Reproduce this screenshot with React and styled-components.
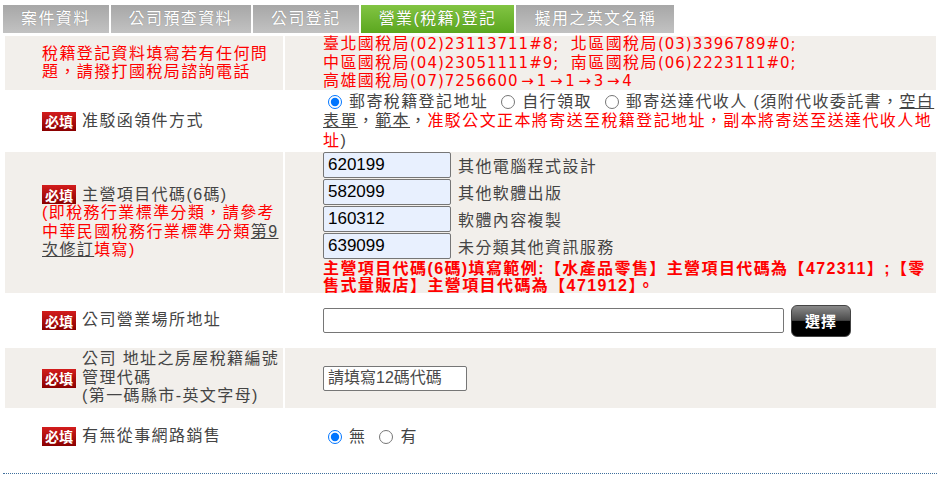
import React from "react";
import styled, { createGlobalStyle } from "styled-components";

const Global = createGlobalStyle`
  html, body { margin: 0; padding: 0; background: #fff; }
  body {
    font-family: "Liberation Sans", "Noto Sans CJK TC", sans-serif;
    font-size: 16px;
    letter-spacing: 1.4px;
    color: #444;
  }
`;

const Page = styled.div`
  padding: 5px 0 0 3px;
  width: 935px;
`;

const Tabs = styled.div`
  display: flex;
  gap: 2px;
  height: 28px;
`;

const Tab = styled.div`
  padding: 0 18px;
  line-height: 28px;
  color: #fff;
  white-space: nowrap;
  background: ${(p) =>
    p.$active
      ? "linear-gradient(#82c443, #5ba71f)"
      : "linear-gradient(#a7a7a7, #c2c2c2)"};
  text-shadow: 0 0 1px rgba(0, 0, 0, 0.3);
`;

const Form = styled.div`
  margin-top: 1px;
  display: grid;
  grid-template-columns: 278px 651px;
  gap: 2px;
  padding: 2px;
`;

const Cell = styled.div`
  background: ${(p) => (p.$shade ? "#f2efeb" : "#fff")};
  height: ${(p) => p.$h}px;
  display: flex;
  align-items: ${(p) => (p.$top ? "flex-start" : "center")};
  box-sizing: border-box;
`;

const LeftCell = styled(Cell)`
  padding-left: 37px;
`;

const RightCell = styled(Cell)`
  padding-left: 38px;
`;

const Red = styled.span`
  color: #f00;
  font-weight: ${(p) => (p.$bold ? 700 : 400)};
`;

const Num = styled.span`
  font-family: "DejaVu Sans", "Noto Sans CJK TC", sans-serif;
  font-size: 15px;
  letter-spacing: 1px;
`;

const Arrow = styled.span`
  display: inline-block;
  width: 18px;
  text-align: center;
  letter-spacing: 0;
`;

const Block = styled.div`
  line-height: ${(p) => p.$lh || 18}px;
  white-space: nowrap;
  color: ${(p) => (p.$red ? "#f00" : "inherit")};
`;

const Link = styled.span`
  color: #444;
  text-decoration: underline;
`;

const Badge = styled.span`
  display: inline-flex;
  align-items: center;
  justify-content: center;
  width: 34px;
  height: 19px;
  flex: none;
  background: linear-gradient(#d31d1d, #8a0000);
  color: #fff;
  font-size: 14px;
  font-weight: 700;
  letter-spacing: 0;
  font-family: "Noto Sans CJK TC", sans-serif;
`;

const LabelRow = styled.div`
  display: flex;
  align-items: center;
  gap: 6px;
`;

const LabelText = styled.div`
  line-height: 18.5px;
`;

const LabelStack = styled.div`
  display: flex;
  flex-direction: column;
`;

const Radio = styled.input.attrs({ type: "radio" })`
  width: 14px;
  height: 14px;
  margin: 0 7px 0 ${(p) => (p.$first ? 5 : 13)}px;
  vertical-align: -2px;
`;

const CodeList = styled.div`
  display: flex;
  flex-direction: column;
  gap: 1px;
`;

const CodeRow = styled.div`
  display: flex;
  align-items: center;
  gap: 7px;
`;

const TextInput = styled.input`
  box-sizing: border-box;
  width: ${(p) => p.$w}px;
  height: ${(p) => p.$h || 25}px;
  border: 1px solid #767676;
  border-radius: 2px;
  padding: 1px 4px;
  margin: 0;
  font-family: "Liberation Sans", "Noto Sans CJK TC", sans-serif;
  font-size: ${(p) => p.$fs || 16}px;
  letter-spacing: 0;
  color: #000;
  background: ${(p) => (p.$filled ? "#e8f0fe" : "#fff")};
  &::placeholder {
    color: #4a4a4a;
  }
`;

const Field = styled.div`
  display: flex;
  align-items: center;
  gap: 7px;
`;

const PickButton = styled.button`
  width: 60px;
  height: 32px;
  border: 1px solid #444;
  border-radius: 6px;
  background: linear-gradient(#8a8a8a 0%, #4a4a4a 48%, #000 50%, #000 100%);
  color: #fff;
  font-family: "Noto Sans CJK TC", sans-serif;
  font-size: 15px;
  font-weight: 700;
  letter-spacing: 1px;
  padding: 0;
`;

const Column = styled.div`
  display: flex;
  flex-direction: column;
`;

const Note = styled.div`
  margin-top: 1px;
  line-height: 17px;
  white-space: nowrap;
`;

const Dotted = styled.div`
  margin-top: 9px;
  width: 934px;
  border-top: 1px dotted #3f6f9c;
`;

const codes = [
  ["620199", "其他電腦程式設計"],
  ["582099", "其他軟體出版"],
  ["160312", "軟體內容複製"],
  ["639099", "未分類其他資訊服務"],
];

const tabs = ["案件資料", "公司預查資料", "公司登記", "營業(稅籍)登記", "擬用之英文名稱"];

export default function App() {
  return (
    <>
      <Global />
      <Page>
        <Tabs>
          {tabs.map((t, i) => (
            <Tab key={t} $active={i === 3}>
              {t}
            </Tab>
          ))}
        </Tabs>
        <Form>
          <LeftCell $shade $h={54}>
            <Block $red $lh={18.5}>
              稅籍登記資料填寫若有任何問
              <br />
              題，請撥打國稅局諮詢電話
            </Block>
          </LeftCell>
          <RightCell $shade $h={54}>
            <Block $red $lh={18.5}>
              臺北國稅局<Num>(02)23113711#8;&nbsp; </Num>北區國稅局<Num>(03)3396789#0;</Num>
              <br />
              中區國稅局<Num>(04)23051111#9;&nbsp; </Num>南區國稅局<Num>(06)2223111#0;</Num>
              <br />
              高雄國稅局<Num>(07)7256600<Arrow>→</Arrow>1<Arrow>→</Arrow>1<Arrow>→</Arrow>3<Arrow>→</Arrow>4</Num>
            </Block>
          </RightCell>

          <LeftCell $h={58}>
            <LabelRow>
              <Badge>必填</Badge>
              <LabelText>准駁函領件方式</LabelText>
            </LabelRow>
          </LeftCell>
          <RightCell $h={58}>
            <Block $lh={19.5}>
              <Radio $first name="pickup" defaultChecked />
              郵寄稅籍登記地址
              <Radio name="pickup" />
              自行領取
              <Radio name="pickup" />
              郵寄送達代收人 (須附代收委託書，<Link>空白</Link>
              <br />
              <Link>表單</Link>，<Link>範本</Link>，
              <Red>准駁公文正本將寄送至稅籍登記地址，副本將寄送至送達代收人地</Red>
              <br />
              <Red>址</Red>)
            </Block>
          </RightCell>

          <LeftCell $shade $h={141}>
            <LabelStack>
              <LabelRow>
                <Badge>必填</Badge>
                <LabelText>主營項目代碼(6碼)</LabelText>
              </LabelRow>
              <Block $red $lh={18.5}>
                (即稅務行業標準分類，請參考
                <br />
                中華民國稅務行業標準分類<Link>第9</Link>
                <br />
                <Link>次修訂</Link>填寫)
              </Block>
            </LabelStack>
          </LeftCell>
          <RightCell $shade $top $h={141}>
            <Column>
              <CodeList>
                {codes.map(([c, d]) => (
                  <CodeRow key={c}>
                    <TextInput $w={128} $h={26} $fs={17} $filled defaultValue={c} />
                    <span>{d}</span>
                  </CodeRow>
                ))}
              </CodeList>
              <Note>
                <Red $bold>
                  主營項目代碼(6碼)填寫範例:【水產品零售】主營項目代碼為【472311】;【零
                  <br />
                  售式量販店】主營項目代碼為【471912】。
                </Red>
              </Note>
            </Column>
          </RightCell>

          <LeftCell $h={51}>
            <LabelRow>
              <Badge>必填</Badge>
              <LabelText>公司營業場所地址</LabelText>
            </LabelRow>
          </LeftCell>
          <RightCell $h={51}>
            <Field>
              <TextInput $w={461} $h={25} />
              <PickButton>選擇</PickButton>
            </Field>
          </RightCell>

          <LeftCell $shade $h={60}>
            <LabelRow>
              <Badge>必填</Badge>
              <LabelText>
                公司 地址之房屋稅籍編號
                <br />
                管理代碼
                <br />
                (第一碼縣市-英文字母)
              </LabelText>
            </LabelRow>
          </LeftCell>
          <RightCell $shade $h={60}>
            <TextInput $w={144} $h={25} placeholder="請填寫12碼代碼" />
          </RightCell>

          <LeftCell $h={52}>
            <LabelRow>
              <Badge>必填</Badge>
              <LabelText>有無從事網路銷售</LabelText>
            </LabelRow>
          </LeftCell>
          <RightCell $h={52}>
            <Block $lh={19}>
              <Radio $first name="online" defaultChecked />
              無
              <Radio name="online" />
              有
            </Block>
          </RightCell>
        </Form>
        <Dotted />
      </Page>
    </>
  );
}
